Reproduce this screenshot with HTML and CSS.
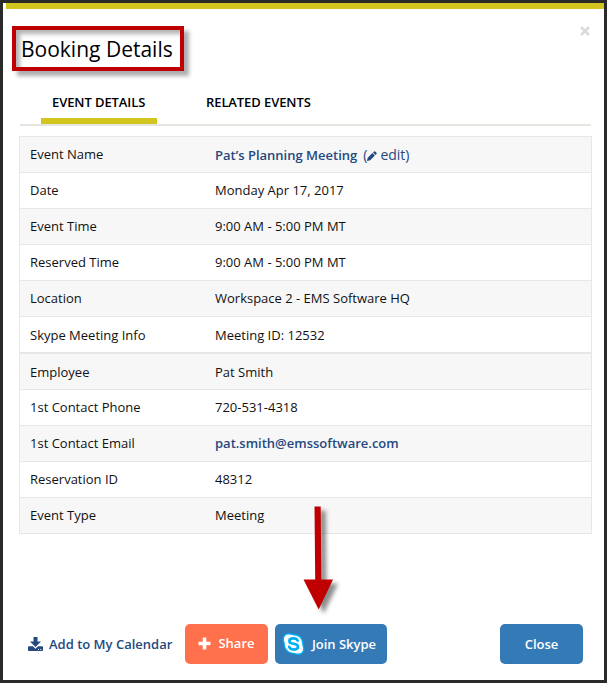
FILE: index.html
```html
<!DOCTYPE html>
<html lang="en">
<head>
<meta charset="utf-8">
<title>Booking Details</title>
<link rel="stylesheet" href="styles.css">
</head>
<body>
<main class="dialog">
  <div class="accent"></div>
  <header class="header">
    <h1 class="title">Booking Details</h1>
    <svg class="dismiss" viewBox="0 0 10 10" role="img" aria-label="Close"><path d="M2 2L8 8M8 2L2 8"/></svg>
  </header>
  <nav class="tabs">
    <a class="tab active">EVENT DETAILS</a>
    <a class="tab related">RELATED EVENTS</a>
  </nav>
  <dl class="details">
    <div class="row"><dt>Event Name</dt><dd class="event-name"><a class="link">Pat’s Planning Meeting</a><a class="edit">(<svg class="pencil" viewBox="0 0 10 10"><path d="M0 10L.7 6.8L5.4 2.1L7.9 4.6L3.2 9.3ZM6 1.500L7 .5Q7.600 0 8.200.5L9.500 1.800Q10 2.400 9.500 3L8.500 4Z"/></svg>edit)</a></dd></div>
    <div class="row"><dt>Date</dt><dd>Monday Apr 17, 2017</dd></div>
    <div class="row"><dt>Event Time</dt><dd>9:00 AM - 5:00 PM MT</dd></div>
    <div class="row"><dt>Reserved Time</dt><dd>9:00 AM - 5:00 PM MT</dd></div>
    <div class="row"><dt>Location</dt><dd>Workspace 2 - EMS Software HQ</dd></div>
    <div class="row skype-row"><dt>Skype Meeting Info</dt><dd>Meeting ID: 12532</dd></div>
    <div class="row employee-row"><dt>Employee</dt><dd>Pat Smith</dd></div>
    <div class="row"><dt>1st Contact Phone</dt><dd>720-531-4318</dd></div>
    <div class="row"><dt>1st Contact Email</dt><dd><a class="link">pat.smith@emssoftware.com</a></dd></div>
    <div class="row"><dt>Reservation ID</dt><dd>48312</dd></div>
    <div class="row"><dt>Event Type</dt><dd>Meeting</dd></div>
  </dl>
  <footer class="footer">
    <a class="calendar"><svg class="download" viewBox="0 0 15 14"><path d="M5.500 0H9.500V4.500H13L7.500 10L2 4.500H5.500Z"/><path fill-rule="evenodd" d="M.8 9.300H4.900L7.500 11.700L10.100 9.300H14.200Q15 9.300 15 10.100V13.200Q15 14 14.200 14H.8Q0 14 0 13.200V10.100Q0 9.300.8 9.300ZM10 12V13H11V12ZM12.300 12V13H13.300V12Z"/></svg><span>Add to My Calendar</span></a>
    <button class="button share"><svg class="plus" viewBox="0 0 13 13"><path d="M6.500 .5V12.500M.5 6.500H12.500"/></svg><span>Share</span></button>
    <button class="button join"><svg class="skype" viewBox="0 0 24 24">
      <path class="halo" d="M7 2C10 2 11 3 12.500 3C18 3 21 7 21 12C21 13.500 22 15 22 17C22 20 20 22 17 22C15 22 14 21 12 21C7 21 3 17 3 12C3 10 2 9 2 7C2 4 4 2 7 2Z"/>
      <path class="cloud" d="M7 2C10 2 11 3 12.500 3C18 3 21 7 21 12C21 13.500 22 15 22 17C22 20 20 22 17 22C15 22 14 21 12 21C7 21 3 17 3 12C3 10 2 9 2 7C2 4 4 2 7 2Z"/>
      <path class="mark" d="M16.300 8.500C15.600 6.600 13.800 6.200 12 6.200C9.500 6.200 7.700 7.200 7.700 9C7.700 13 16.700 10.500 16.700 14.700C16.700 16.700 14.700 17.800 12.200 17.800C9.700 17.800 8.200 16.900 7.500 15"/>
    </svg><span>Join Skype</span></button>
    <button class="button close">Close</button>
  </footer>
  <svg class="arrow" viewBox="0 0 50 120"><path d="M14.500 6.500H20.700L21.400 79.500H33L18.700 109.500L3.500 79.500H15.200Z"/></svg>
</main>
</body>
</html>
```
FILE: styles.css
```css
* { box-sizing: border-box; }
body { margin: 0; background: #2b2a2b; font-family: "Open Sans", sans-serif; font-size: 13px; color: #111; }
.dialog { position: relative; width: 607px; height: 683px; border: 3px solid #2b2a2b; background: #fff; }
.accent { height: 6px; margin-left: 3px; background: #d2c51f; }
.header { display: flex; justify-content: space-between; align-items: flex-start; height: 71px; padding: 17px 14.5px 0 9px; }
.title { width: 172px; height: 45px; margin: 0; padding-left: 5px; border: 4px solid #c00000; font-size: 21px; font-weight: 400; line-height: 38px; white-space: nowrap; color: #000; box-shadow: 5px 5px 4px rgba(0,0,0,.32), inset 4px 4px 4px rgba(0,0,0,.3); }
.dismiss { width: 10px; height: 10px; margin-top: -.5px; fill: none; stroke: #dadcde; stroke-width: 2.8; stroke-linecap: square; }
.tabs { display: flex; height: 46px; margin: 0 13px 0 17px; padding-left: 21px; border-bottom: 2px solid #e6e6e0; }
.tab { height: 44px; padding-top: 13px; font-size: 13px; font-weight: 600; line-height: 18px; white-space: nowrap; color: #000; letter-spacing: -.09px; }
.active { width: 116px; padding-left: 11px; border-bottom: 6px solid #d2c51f; }
.related { margin-left: 49px; }
.details { width: 573px; margin: 10px 0 0 16px; border: 1px solid #e7e7e7; }
.row { display: flex; align-items: center; height: 36px; padding-bottom: 2px; border-bottom: 1px solid #e7e7e7; }
.row:nth-child(odd) { background: #f7f7f7; }
.row:last-child { height: 35px; padding-bottom: 1px; border-bottom: 0; }
.skype-row { height: 37px; padding-bottom: 0; border-bottom-width: 2px; }
.employee-row { padding-bottom: 0; }
.row dt { width: 195px; padding-left: 10px; }
.row dd { display: flex; align-items: center; margin: 0; }
.row .event-name { padding-top: 2px; }
.link { font-weight: 600; color: #25497f; }
.edit { display: flex; align-items: center; margin-left: 6px; font-size: 14px; color: #25497f; }
.pencil { width: 10px; height: 10px; margin: 3px 3px 0 0; fill: #25497f; }
.footer { display: flex; align-items: center; height: 40px; margin: 90px 21px 0 25px; }
.calendar { display: flex; align-items: center; gap: 6px; width: 157px; font-weight: 600; color: #25497f; white-space: nowrap; }
.download { width: 15px; height: 14px; fill: #25497f; }
.button { display: flex; align-items: center; justify-content: center; height: 40px; padding: 0; border: 0; border-radius: 5px; background: #337ab7; color: #fff; font: 600 13px "Open Sans", sans-serif; white-space: nowrap; }
.share { width: 83px; padding-bottom: 2px; gap: 7px; background: #ff704d; }
.plus { width: 13px; height: 13px; margin-top: 1px; fill: none; stroke: #fff; stroke-width: 3.6; }
.join { width: 112px; margin-left: 7px; padding-right: 4px; gap: 7px; }
.skype { width: 23px; height: 24px; margin-bottom: 1px; }
.halo { fill: #00aff0; stroke: #00aff0; stroke-width: 3; }
.cloud { fill: #fff; }
.mark { fill: none; stroke: #00aff0; stroke-width: 2.8; stroke-linecap: round; }
.close { width: 83px; margin-left: auto; }
.arrow { position: absolute; left: 297px; top: 497px; width: 50px; height: 120px; fill: #c00000; filter: drop-shadow(5px 4px 2px rgba(0,0,0,.45)); }
```
